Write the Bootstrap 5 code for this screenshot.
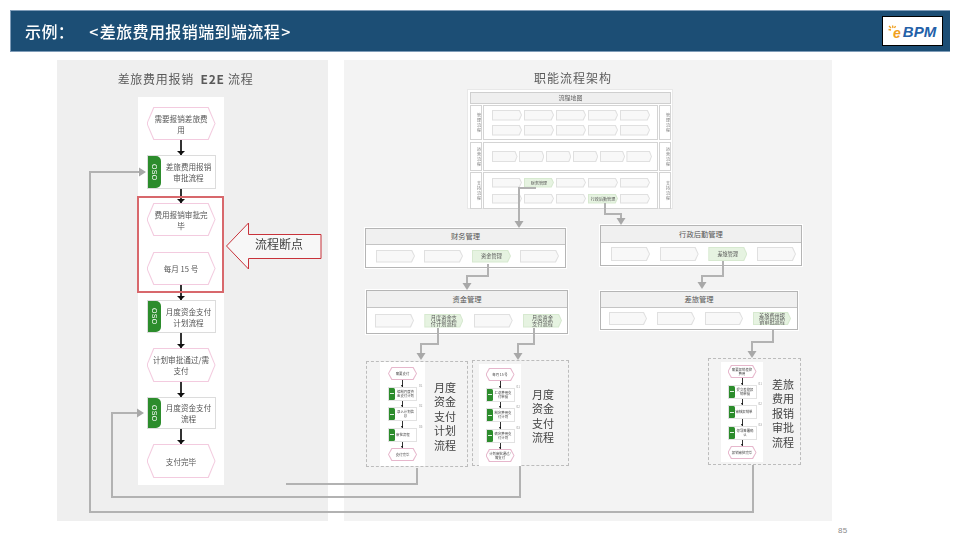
<!DOCTYPE html>
<html lang="zh-CN">
<head>
<meta charset="utf-8">
<title>差旅费用报销端到端流程</title>
<link href="https://cdn.jsdelivr.net/npm/bootstrap@5.3.0/dist/css/bootstrap.min.css" rel="stylesheet">
<style>
html,body{margin:0;background:#fff;}
body{font-family:"Noto Sans CJK SC","Liberation Sans",sans-serif;color:#555;}
.slide{width:960px;height:540px;overflow:hidden;background:#fff;}
.top-bar{margin:10px 10px 0;height:42px;background:#1c4e75;border:1px solid #7f9cb8;border-width:1px 0 1px 1px;padding:0 7px 0 14px;color:#fff;font-size:16px;font-weight:500;letter-spacing:.4px;}
.top-txt{filter:blur(.25px);}
.top-bar .gt{margin-left:14px;}
.top-bar .ang{margin:0 1px;}
.logo-box{width:61px;height:30px;background:#fff;border:1px solid #000;font-family:"Liberation Sans",sans-serif;font-style:italic;font-weight:700;letter-spacing:0;padding-left:10px;}
.logo-e{color:#f0a020;font-size:14px;line-height:1;margin-top:3px;}
.logo-bpm{color:#2360a8;font-size:15px;line-height:1;margin-left:2px;}
.logo-ray{left:5px;top:8px;}
.panels{margin:8px 0 0 57px;gap:16px;height:461px;}
.panel-l{width:271px;background:#efefef;}
.panel-r{width:488px;background:#f3f3f3;}
.title-l{height:37px;padding:10px 14px 0 0;font-size:12px;line-height:18px;letter-spacing:.7px;color:#5a5a5a;text-align:center;white-space:pre;filter:blur(.2px);}
.flow-col{width:86px;margin-left:81px;padding:10px 0 7px;background:#fff;}
.flow-arrow{width:2px;height:15px;background:#333;position:relative;}
.flow-arrow.a14{height:14px;}
.flow-arrow::after{content:"";position:absolute;left:-3px;bottom:0;border-left:4px solid transparent;border-right:4px solid transparent;border-top:4px solid #111;}
.hexa{position:relative;width:69px;height:33px;background:#f3cbdf;clip-path:polygon(0 50%,10% 0,90% 0,100% 50%,90% 100%,10% 100%);font-size:7.6px;line-height:11px;color:#555;text-align:center;padding:0 4px;filter:blur(.4px);}
.hexa::before{content:"";position:absolute;inset:1px;z-index:-1;background:#fff;clip-path:polygon(0 50%,10% 0,90% 0,100% 50%,90% 100%,10% 100%);}
.hexa.gap16{margin-top:16px;}
.hexa.h34{height:34px;}
.proc{width:69px;height:34px;background:#fff;border:1.5px solid #dcdcdc;font-size:7.6px;line-height:11px;color:#555;text-align:center;}
.proc.h33{height:33px;}
.proc.h32{height:32px;}
.proc-tab{width:13px;background:#2c8c2c;border-radius:0 5px 5px 0;color:#fff;font:400 7px/13px "Liberation Sans",sans-serif;writing-mode:vertical-rl;text-align:center;letter-spacing:.3px;flex:none;filter:blur(.2px);}
.proc-txt{padding:0 3px 0 5px;filter:blur(.4px);}
.break-box{left:80px;top:136px;width:87px;height:97px;border:2px solid #d8686c;}
.callout{left:169px;top:162px;width:96px;height:48px;}
.callout-txt{left:29px;top:13px;width:48px;font-size:12px;line-height:18px;color:#404040;text-align:center;filter:blur(.2px);}
.title-r{left:190px;top:9px;font-size:12px;line-height:18px;letter-spacing:1px;color:#5a5a5a;filter:blur(.2px);}
.flow-map{left:123px;top:29px;width:206px;height:120px;background:#fff;padding:2px 1px 1px 2px;border:1px solid #e8e8e8;filter:blur(.35px);}
.map-head{height:12px;background:#efefef;border:1px solid #cfcfcf;font-size:6px;line-height:10px;text-align:center;color:#666;}
.map-row{margin-top:1px;gap:1px;}
.map-row.r1{height:35px;}
.map-row.r2{height:29px;margin-top:2px;}
.map-row.r3{height:37px;}
.map-side{width:12px;border:1px solid #d4d4d4;font-size:4px;line-height:5px;writing-mode:vertical-rl;text-orientation:upright;color:#777;text-align:center;letter-spacing:1px;flex:none;}
.map-main{flex:1;border:1px solid #d4d4d4;padding-left:8px;gap:4px;}
.map-row.r3 .map-main{gap:6px;}
.map-line{gap:2px;}
.map-row.r2 .map-line{gap:1.4px;}
.penta{position:relative;flex:none;background:#e0e0e0;clip-path:polygon(0 0,92% 0,100% 50%,92% 100%,0 100%);font-size:5.2px;line-height:6px;text-align:center;color:#555;}
.penta::before{content:"";position:absolute;inset:1px;z-index:-1;background:#f8f8f8;clip-path:polygon(0 0,92% 0,100% 50%,92% 100%,0 100%);}
.penta.on{background:#d7e9d0;}
.penta.on::before{background:#e6f3e1;}
.p-map{width:30px;height:11px;font-size:4.1px;}
.map-row.r2 .p-map{width:25.5px;}
.map-row.r3 .p-map{height:10px;}
.dom-box{background:#fff;border:1px solid #b5b5b5;box-shadow:0 0 0 1px #fff;filter:blur(.3px);}
.dom-head{background:#f0f0f0;border-bottom:1px solid #c4c4c4;font-size:7.3px;color:#555;text-align:center;}
.dom-body{flex:1;padding:0 6px 0 10px;}
.p-dom{width:39px;height:13px;}
.fin{left:21px;top:168px;width:201px;height:40px;}
.fin .dom-head,.cash .dom-head,.adm .dom-head,.trv .dom-head{height:16px;line-height:15px;}
.cash{left:22px;top:230px;width:202px;height:44px;}
.cash .dom-head{height:17px;line-height:16px;}
.cash .dom-body{padding:0 5px 0 8px;}
.cash .p-dom{height:14px;}
.adm{left:256px;top:165px;width:202px;height:41px;}
.adm .dom-head{height:17px;line-height:16px;}
.adm .dom-body{padding:0 5px 0 10px;}
.adm .p-dom{height:14px;}
.trv{left:256px;top:231px;width:198px;height:39px;}
.trv .dom-body{padding:0 6px 0 8px;}
.trv .dom-head{height:16px;}
.trv .p-dom{width:38px;}
.dash-a,.dash-b,.dash-c{border:1px dashed #bcbcbc;}
.dash-a{left:22px;top:301px;width:102px;height:106px;padding-left:13px;gap:9px;}
.dash-b{left:128px;top:300px;width:97px;height:106px;padding-left:6px;gap:11px;}
.dash-c{left:364px;top:298px;width:93px;height:107px;padding-left:12px;gap:9px;}
.thumb{background:#fff;filter:blur(.4px);padding-top:5px;}
.dash-a .thumb{width:45px;height:104px;}
.dash-b .thumb{width:42px;height:102px;margin-top:3px;padding-top:4px;}
.dash-c .thumb{width:42px;height:100px;margin-top:3px;padding-top:3px;}
.mini-hex{position:relative;width:29px;height:13px;background:#e6b7cc;clip-path:polygon(0 50%,12% 0,88% 0,100% 50%,88% 100%,12% 100%);font-size:3.4px;line-height:4px;text-align:center;color:#444;padding:0 3px;}
.mini-hex::before{content:"";position:absolute;inset:1px;z-index:-1;background:#fff;clip-path:polygon(0 50%,12% 0,88% 0,100% 50%,88% 100%,12% 100%);}
.mini-proc{position:relative;width:29px;height:14px;background:#fff;border:1px solid #e2e2e2;font-size:3.4px;line-height:4px;text-align:center;color:#444;}
.mini-tab{width:6px;background:#2c8c2c;border-radius:0 1.5px 1.5px 0;flex:none;}
.mini-tab::after{content:"";width:4px;height:1px;background:#dff0df;}
.mini-txt{padding:0 1px;}
.mini-no{position:absolute;left:30px;top:-3px;font-size:3px;line-height:3px;color:#999;}
.mini-arrow{width:1px;height:6.5px;background:#333;position:relative;}
.mini-arrow::after{content:"";position:absolute;left:-1px;bottom:0;border-left:1.5px solid transparent;border-right:1.5px solid transparent;border-top:2px solid #111;}
.side-txt{width:24px;font-size:11px;line-height:14.4px;color:#444;flex:none;filter:blur(.2px);}
.dash-a .side-txt{margin-top:18px;}
.dash-b .side-txt{margin-top:26px;}
.dash-c .side-txt{margin-top:18px;}
.wires{left:0;top:0;pointer-events:none;}
.wires path{fill:none;stroke:#b2b2b2;stroke-width:2;}
.wires polygon{fill:#a8a8a8;}
.page-no{margin:4px 0 0 838px;font-size:8px;line-height:12px;color:#8a8a8a;font-family:"Liberation Sans",sans-serif;letter-spacing:.4px;}
</style>
</head>
<body>
<div class="slide position-relative">

  <header class="top-bar d-flex align-items-center justify-content-between">
    <div class="top-txt">示例：<span class="gt"><span class="ang">&lt;</span>差旅费用报销端到端流程<span class="ang">&gt;</span></span></div>
    <div class="logo-box position-relative d-flex align-items-center">
      <svg class="logo-ray position-absolute" width="9" height="9" viewBox="0 0 9 9"><path d="M1 1l2 2M.5 4.5L3 5M4.5 .5L5 3M7.5 1L6.5 3" stroke="#f0a020" stroke-width="1.3" fill="none"/></svg>
      <span class="logo-e">e</span><span class="logo-bpm">BPM</span>
    </div>
  </header>

  <main class="panels d-flex">
    <section class="panel-l position-relative">
      <div class="title-l">差旅费用报销  <b>E2E</b> 流程</div>
      <div class="flow-col d-flex flex-column align-items-center">
        <div class="hexa d-flex align-items-center justify-content-center"><span>需要报销差旅费<br>用</span></div>
        <div class="flow-arrow"></div>
        <div class="proc d-flex"><div class="proc-tab">OSO</div><div class="proc-txt align-self-center">差旅费用报销审批流程</div></div>
        <div class="flow-arrow a14"></div>
        <div class="hexa d-flex align-items-center justify-content-center"><span>费用报销审批完<br>毕</span></div>
        <div class="hexa gap16 d-flex align-items-center justify-content-center"><span>每月 15 号</span></div>
        <div class="flow-arrow"></div>
        <div class="proc h33 d-flex"><div class="proc-tab">OSO</div><div class="proc-txt align-self-center">月度资金支付计划流程</div></div>
        <div class="flow-arrow"></div>
        <div class="hexa h34 d-flex align-items-center justify-content-center"><span>计划审批通过/需<br>支付</span></div>
        <div class="flow-arrow"></div>
        <div class="proc h32 d-flex"><div class="proc-tab">OSO</div><div class="proc-txt align-self-center">月度资金支付流程</div></div>
        <div class="flow-arrow"></div>
        <div class="hexa h34 d-flex align-items-center justify-content-center"><span>支付完毕</span></div>
      </div>
      <div class="break-box position-absolute"></div>
      <div class="callout position-absolute">
        <svg width="96" height="48" viewBox="0 0 96 48"><polygon points="0.5,24 22.5,1 22.5,12.5 95,12.5 95,36.5 22.5,36.5 22.5,47" fill="#f7f7f7" stroke="#c8323a" stroke-width="1"/></svg>
        <div class="callout-txt position-absolute">流程断点</div>
      </div>
    </section>

    <section class="panel-r position-relative">
      <div class="title-r position-absolute">职能流程架构</div>

      <div class="flow-map position-absolute">
        <div class="map-head">流程地图</div>
        <div class="map-row r1 d-flex">
          <div class="map-side">管理流程</div>
          <div class="map-main d-flex flex-column justify-content-center">
            <div class="map-line d-flex"><i class="penta p-map"></i><i class="penta p-map"></i><i class="penta p-map"></i><i class="penta p-map"></i><i class="penta p-map"></i></div>
            <div class="map-line d-flex"><i class="penta p-map"></i><i class="penta p-map"></i><i class="penta p-map"></i><i class="penta p-map"></i><i class="penta p-map"></i></div>
          </div>
          <div class="map-side">管理流程</div>
        </div>
        <div class="map-row r2 d-flex">
          <div class="map-side">运营流程</div>
          <div class="map-main d-flex flex-column justify-content-center">
            <div class="map-line d-flex"><i class="penta p-map"></i><i class="penta p-map"></i><i class="penta p-map"></i><i class="penta p-map"></i><i class="penta p-map"></i><i class="penta p-map"></i></div>
          </div>
          <div class="map-side">运营流程</div>
        </div>
        <div class="map-row r3 d-flex">
          <div class="map-side">支持流程</div>
          <div class="map-main d-flex flex-column justify-content-center">
            <div class="map-line d-flex"><i class="penta p-map"></i><div class="penta p-map on d-flex align-items-center justify-content-center">财务管理</div><i class="penta p-map"></i><i class="penta p-map"></i><i class="penta p-map"></i></div>
            <div class="map-line d-flex"><i class="penta p-map"></i><i class="penta p-map"></i><i class="penta p-map"></i><div class="penta p-map on d-flex align-items-center justify-content-center">行政后勤管理</div><i class="penta p-map"></i></div>
          </div>
          <div class="map-side">支持流程</div>
        </div>
      </div>

      <div class="dom-box fin position-absolute d-flex flex-column">
        <div class="dom-head">财务管理</div>
        <div class="dom-body d-flex align-items-center justify-content-between"><i class="penta p-dom"></i><i class="penta p-dom"></i><div class="penta p-dom on d-flex align-items-center justify-content-center">资金管理</div><i class="penta p-dom"></i></div>
      </div>
      <div class="dom-box cash position-absolute d-flex flex-column">
        <div class="dom-head">资金管理</div>
        <div class="dom-body d-flex align-items-center justify-content-between"><i class="penta p-dom"></i><div class="penta p-dom on d-flex align-items-center justify-content-center"><span>月度资金支<br>付计划流程</span></div><i class="penta p-dom"></i><div class="penta p-dom on d-flex align-items-center justify-content-center"><span>月度资金<br>支付流程</span></div></div>
      </div>
      <div class="dom-box adm position-absolute d-flex flex-column">
        <div class="dom-head">行政后勤管理</div>
        <div class="dom-body d-flex align-items-center justify-content-between"><i class="penta p-dom"></i><i class="penta p-dom"></i><div class="penta p-dom on d-flex align-items-center justify-content-center">差旅管理</div><i class="penta p-dom"></i></div>
      </div>
      <div class="dom-box trv position-absolute d-flex flex-column">
        <div class="dom-head">差旅管理</div>
        <div class="dom-body d-flex align-items-center justify-content-between"><i class="penta p-dom"></i><i class="penta p-dom"></i><i class="penta p-dom"></i><div class="penta p-dom on d-flex align-items-center justify-content-center"><span>差旅费用报<br>销审批流程</span></div></div>
      </div>

      <div class="dash-a position-absolute d-flex">
        <div class="thumb d-flex flex-column align-items-center">
          <div class="mini-hex d-flex align-items-center justify-content-center">需要支付</div><div class="mini-arrow"></div>
          <div class="mini-proc d-flex"><div class="mini-tab d-flex align-items-center justify-content-center"></div><div class="mini-txt align-self-center">编制月度资金支付计划</div><span class="mini-no">01</span></div><div class="mini-arrow"></div>
          <div class="mini-proc d-flex"><div class="mini-tab d-flex align-items-center justify-content-center"></div><div class="mini-txt align-self-center">录入计划信息</div><span class="mini-no">02</span></div><div class="mini-arrow"></div>
          <div class="mini-proc d-flex"><div class="mini-tab d-flex align-items-center justify-content-center"></div><div class="mini-txt align-self-center">审批流程</div><span class="mini-no">03</span></div><div class="mini-arrow"></div>
          <div class="mini-hex d-flex align-items-center justify-content-center">支付完毕</div>
        </div>
        <div class="side-txt">月度资金支付计划流程</div>
      </div>

      <div class="dash-b position-absolute d-flex">
        <div class="thumb d-flex flex-column align-items-center">
          <div class="mini-hex d-flex align-items-center justify-content-center">每月 15 号</div><div class="mini-arrow"></div>
          <div class="mini-proc d-flex"><div class="mini-tab d-flex align-items-center justify-content-center"></div><div class="mini-txt align-self-center">汇总费用支付单据</div><span class="mini-no">01</span></div><div class="mini-arrow"></div>
          <div class="mini-proc d-flex"><div class="mini-tab d-flex align-items-center justify-content-center"></div><div class="mini-txt align-self-center">制定费用支付计划</div><span class="mini-no">02</span></div><div class="mini-arrow"></div>
          <div class="mini-proc d-flex"><div class="mini-tab d-flex align-items-center justify-content-center"></div><div class="mini-txt align-self-center">确定费用支付计划</div><span class="mini-no">03</span></div><div class="mini-arrow"></div>
          <div class="mini-hex d-flex align-items-center justify-content-center">计划审批通过/需支付</div>
        </div>
        <div class="side-txt">月度资金支付流程</div>
      </div>

      <div class="dash-c position-absolute d-flex">
        <div class="thumb d-flex flex-column align-items-center">
          <div class="mini-hex d-flex align-items-center justify-content-center">需要报销差旅费用</div><div class="mini-arrow"></div>
          <div class="mini-proc d-flex"><div class="mini-tab d-flex align-items-center justify-content-center"></div><div class="mini-txt align-self-center">提交差旅报销单据</div><span class="mini-no">01</span></div><div class="mini-arrow"></div>
          <div class="mini-proc d-flex"><div class="mini-tab d-flex align-items-center justify-content-center"></div><div class="mini-txt align-self-center">审核报销单</div><span class="mini-no">02</span></div><div class="mini-arrow"></div>
          <div class="mini-proc d-flex"><div class="mini-tab d-flex align-items-center justify-content-center"></div><div class="mini-txt align-self-center">领导签署确认</div><span class="mini-no">03</span></div><div class="mini-arrow"></div>
          <div class="mini-hex d-flex align-items-center justify-content-center">报销审批完毕</div>
        </div>
        <div class="side-txt">差旅费用报销审批流程</div>
      </div>
    </section>
  </main>

  <div class="page-no">85</div>

  <svg class="wires position-absolute" width="960" height="540" viewBox="0 0 960 540">
    <path d="M286 484H417V468"/>
    <path d="M520 466V497H112V413H138"/>
    <polygon points="144,413 137,408.5 137,417.5"/>
    <path d="M753 465V512H90V172H140"/>
    <polygon points="146,172 139,167.5 139,176.5"/>
    <path d="M536 188H519V222"/>
    <polygon points="519,228 514.5,221 523.5,221"/>
    <path d="M605 203V214H621V219"/>
    <polygon points="621,225 616.5,218 625.5,218"/>
    <path d="M488 264V276H467V284"/>
    <polygon points="467,290 462.5,283 471.5,283"/>
    <path d="M723 261V276H702V283"/>
    <polygon points="702,289 697.5,282 706.5,282"/>
    <path d="M438 328V344H421V354"/>
    <polygon points="421,360 416.5,353 425.5,353"/>
    <path d="M534 328V344H518V354"/>
    <polygon points="518,360 513.5,353 522.5,353"/>
    <path d="M773 330V342H752V352"/>
    <polygon points="752,358 747.5,351 756.5,351"/>
  </svg>
</div>
<script src="https://cdn.jsdelivr.net/npm/bootstrap@5.3.0/dist/js/bootstrap.bundle.min.js"></script>
</body>
</html>
